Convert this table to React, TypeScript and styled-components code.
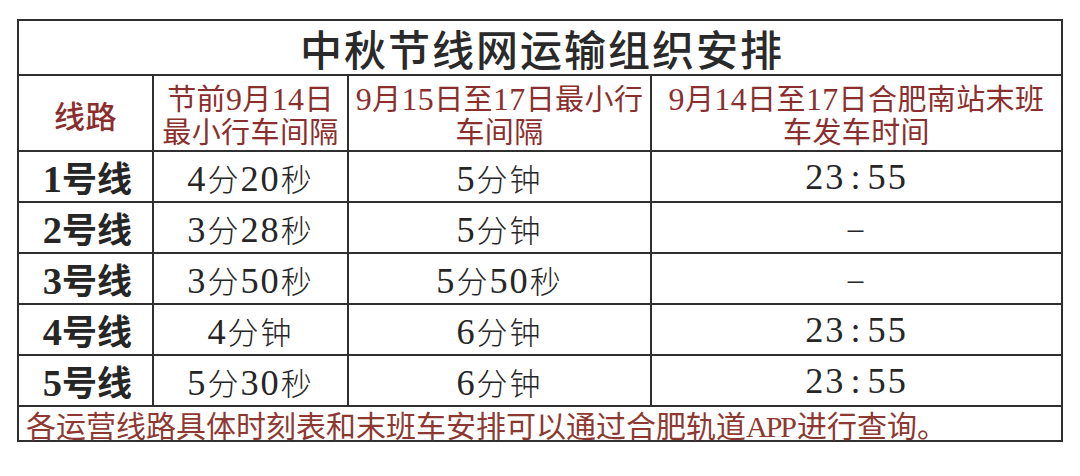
import React from "react";
import styled, { createGlobalStyle } from "styled-components";

const GlobalStyle = createGlobalStyle`
  html, body {
    margin: 0;
    padding: 0;
    background: #ffffff;
  }
  body {
    font-family: "Liberation Serif", "Noto Sans CJK SC", serif;
  }
`;

const Page = styled.div`
  padding: 19px 0 0 17px;
  width: 1080px;
  height: 476px;
  box-sizing: border-box;
`;

const Sheet = styled.div`
  display: grid;
  grid-template-columns: 133px 193px 301px 409px;
  grid-template-rows: 53px 74px repeat(5, 49px) 33px;
  gap: 2px;
  padding: 2px;
  width: fit-content;
  background: #2f2f2f;
`;

const BaseCell = styled.div`
  background: #ffffff;
  display: flex;
  align-items: center;
  justify-content: center;
  text-align: center;
  white-space: nowrap;
  font-family: "Liberation Serif", "Noto Sans CJK SC", serif;
`;

const Text = styled.span`
  display: block;
`;

const TitleCell = styled(BaseCell)`
  grid-column: 1 / -1;
  font-family: "Noto Sans CJK SC", sans-serif;
  font-size: 42px;
  font-weight: 500;
  letter-spacing: 2px;
  color: #2a2a2a;
  padding-left: 4px;
`;

const HeadCell = styled(BaseCell)<{ $strong?: boolean }>`
  font-size: ${(p) => (p.$strong ? "31px" : "29px")};
  font-weight: ${(p) => (p.$strong ? 500 : 400)};
  line-height: 33px;
  color: #8b2e2e;
  padding-top: 8px;
  letter-spacing: 0.4px;
`;

const LineCell = styled(BaseCell)`
  font-size: 35px;
  font-weight: 700;
  color: #262626;
  padding-left: 4px;
`;

const ValueCell = styled(BaseCell)`
  font-size: 31px;
  font-weight: 300;
  color: #262626;
  letter-spacing: 2px;
  padding-top: 2px;
`;

const Num = styled.span<{ $scale?: number }>`
  font-family: "Liberation Serif", serif;
  font-size: ${(p) => p.$scale ?? 1.15}em;
  line-height: 1;
`;

const Colon = styled.span`
  margin: 0 5px;
`;

const NoteCell = styled(BaseCell)`
  grid-column: 1 / -1;
  justify-content: flex-start;
  padding-left: 7px;
  font-size: 30px;
  color: #8e3832;
`;

const Latin = styled.span`
  letter-spacing: -2px;
  margin-right: 2px;
`;

type Row = { line: string; before: string; during: string; last: string };

const rows: Row[] = [
  { line: "1号线", before: "4分20秒", during: "5分钟", last: "23:55" },
  { line: "2号线", before: "3分28秒", during: "5分钟", last: "–" },
  { line: "3号线", before: "3分50秒", during: "5分50秒", last: "–" },
  { line: "4号线", before: "4分钟", during: "6分钟", last: "23:55" },
  { line: "5号线", before: "5分30秒", during: "6分钟", last: "23:55" },
];

function withNums(text: string, scale: number) {
  const parts = text.split(/(\d+)/).filter((s) => s.length > 0);
  return parts.map((part, i) =>
    /^\d+$/.test(part) ? (
      <Num key={i} $scale={scale}>
        {part}
      </Num>
    ) : (
      <React.Fragment key={i}>{part}</React.Fragment>
    )
  );
}

function renderTime(t: string) {
  if (!t.includes(":")) return t;
  const [h, m] = t.split(":");
  return (
    <Num $scale={1.17}>
      {h}
      <Colon>:</Colon>
      {m}
    </Num>
  );
}

export default function App() {
  return (
    <>
      <GlobalStyle />
      <Page>
        <Sheet>
          <TitleCell>
            <Text>中秋节线网运输组织安排</Text>
          </TitleCell>
          <HeadCell $strong>
            <Text>线路</Text>
          </HeadCell>
          <HeadCell>
            <Text>
              {withNums("节前9月14日", 1.1)}
              <br />
              最小行车间隔
            </Text>
          </HeadCell>
          <HeadCell>
            <Text>
              {withNums("9月15日至17日最小行", 1.1)}
              <br />
              车间隔
            </Text>
          </HeadCell>
          <HeadCell>
            <Text>
              {withNums("9月14日至17日合肥南站末班", 1.1)}
              <br />
              车发车时间
            </Text>
          </HeadCell>
          {rows.map((r) => (
            <React.Fragment key={r.line}>
              <LineCell>
                <Text>{withNums(r.line, 1.1)}</Text>
              </LineCell>
              <ValueCell>
                <Text>{withNums(r.before, 1.17)}</Text>
              </ValueCell>
              <ValueCell>
                <Text>{withNums(r.during, 1.17)}</Text>
              </ValueCell>
              <ValueCell>
                <Text>{renderTime(r.last)}</Text>
              </ValueCell>
            </React.Fragment>
          ))}
          <NoteCell>
            <Text>
              各运营线路具体时刻表和末班车安排可以通过合肥轨道<Latin>APP</Latin>进行查询。
            </Text>
          </NoteCell>
        </Sheet>
      </Page>
    </>
  );
}
